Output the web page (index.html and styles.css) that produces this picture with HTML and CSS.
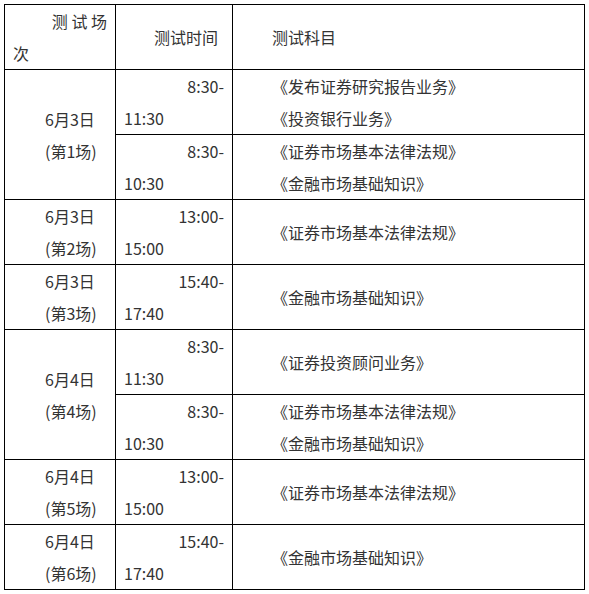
FILE: index.html
```html
<!DOCTYPE html>
<html lang="zh-CN">
<head>
<meta charset="utf-8">
<title>测试场次</title>
<link rel="stylesheet" href="styles.css">
</head>
<body>
<table class="sched">
  <colgroup>
    <col class="c1">
    <col class="c2">
    <col class="c3">
  </colgroup>
  <tr>
    <td class="hd-first"><div class="hd-a">测 试 场</div><div class="hd-b">次</div></td>
    <td class="hd-time">测试时间</td>
    <td class="subj">测试科目</td>
  </tr>
  <tr>
    <td class="date" rowspan="2"><div>6月3日</div><div>(第1场)</div></td>
    <td class="time"><div class="t1">8:30-</div><div>11:30</div></td>
    <td class="subj"><div>《发布证券研究报告业务》</div><div>《投资银行业务》</div></td>
  </tr>
  <tr>
    <td class="time"><div class="t1">8:30-</div><div>10:30</div></td>
    <td class="subj"><div>《证券市场基本法律法规》</div><div>《金融市场基础知识》</div></td>
  </tr>
  <tr>
    <td class="date"><div>6月3日</div><div>(第2场)</div></td>
    <td class="time"><div class="t1">13:00-</div><div>15:00</div></td>
    <td class="subj">《证券市场基本法律法规》</td>
  </tr>
  <tr>
    <td class="date"><div>6月3日</div><div>(第3场)</div></td>
    <td class="time"><div class="t1">15:40-</div><div>17:40</div></td>
    <td class="subj">《金融市场基础知识》</td>
  </tr>
  <tr>
    <td class="date" rowspan="2"><div>6月4日</div><div>(第4场)</div></td>
    <td class="time"><div class="t1">8:30-</div><div>11:30</div></td>
    <td class="subj">《证券投资顾问业务》</td>
  </tr>
  <tr>
    <td class="time"><div class="t1">8:30-</div><div>10:30</div></td>
    <td class="subj"><div>《证券市场基本法律法规》</div><div>《金融市场基础知识》</div></td>
  </tr>
  <tr>
    <td class="date"><div>6月4日</div><div>(第5场)</div></td>
    <td class="time"><div class="t1">13:00-</div><div>15:00</div></td>
    <td class="subj">《证券市场基本法律法规》</td>
  </tr>
  <tr>
    <td class="date"><div>6月4日</div><div>(第6场)</div></td>
    <td class="time"><div class="t1">15:40-</div><div>17:40</div></td>
    <td class="subj">《金融市场基础知识》</td>
  </tr>
</table>
</body>
</html>
```

FILE: styles.css
```css
html, body {
  margin: 0;
  padding: 0;
  background: #fff;
}

body {
  font-family: "Noto Sans CJK SC", "Noto Sans", sans-serif;
  font-size: 16px;
  color: #333;
}

.sched {
  margin: 4px 0 0 4px;
  border-collapse: collapse;
  table-layout: fixed;
  width: 580px;
}

.c1 { width: 111px; }
.c2 { width: 117px; }
.c3 { width: 352px; }

.sched td {
  border: 1px solid #000;
  padding: 0 8px;
  line-height: 32px;
  vertical-align: middle;
  white-space: nowrap;
}

.hd-a {
  text-align: right;
}

.hd-b {
  text-align: left;
}

.sched td.hd-time {
  padding-left: 38px;
}

.sched td.date {
  padding-left: 40px;
}

.t1 {
  text-align: right;
}

.sched td.subj {
  padding-left: 39px;
}
```
